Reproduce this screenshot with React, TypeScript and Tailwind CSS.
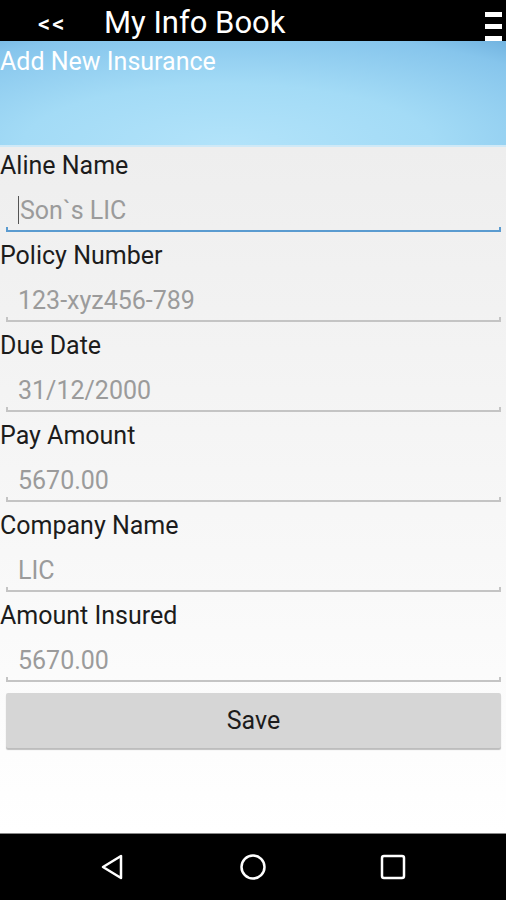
import React from 'react';

const FIELDS = [
  { label: 'Aline Name', value: 'Son`s LIC', focused: true },
  { label: 'Policy Number', value: '123-xyz456-789' },
  { label: 'Due Date', value: '31/12/2000' },
  { label: 'Pay Amount', value: '5670.00' },
  { label: 'Company Name', value: 'LIC' },
  { label: 'Amount Insured', value: '5670.00' },
];

function Field({ label, value, focused }: { label: string; value: string; focused?: boolean }) {
  const line = focused ? 'bg-[#5a9bd0]' : 'bg-[#c4c4c4]';
  return (
    <div className="flex flex-col h-[90px]">
      <div className="h-[36px] flex items-center text-[25px] text-[#1c1c1c] leading-none">{label}</div>
      <div className="relative ml-[6px] mr-[5px] h-[54px] flex items-center pl-[12px]">
        {focused && <span className="w-[1px] h-[28px] bg-[#555] mr-[1px]" />}
        <span className="text-[25px] leading-none text-[#9b9b9b]">{value}</span>
        {/* underline with end ticks */}
        <div className={`absolute left-0 right-0 bottom-[5px] h-[2px] ${line}`} />
        <div className={`absolute left-0 bottom-[5px] w-[2px] h-[5px] ${line}`} />
        <div className={`absolute right-0 bottom-[5px] w-[2px] h-[5px] ${line}`} />
      </div>
    </div>
  );
}

export default function App() {
  return (
    <div className="w-[506px] h-[900px] flex flex-col overflow-hidden font-['Roboto','Liberation_Sans',sans-serif]">
      {/* Action bar */}
      <div className="relative h-[41px] bg-black flex items-center shrink-0">
        <span className="ml-[38px] w-[28px] text-white text-[24px] font-medium leading-none tracking-[2px] pt-[6px]">&lt;&lt;</span>
        <span className="ml-[38px] text-white text-[31px] leading-none pt-[4px]">My Info Book</span>
        <div className="absolute right-[4px] top-[12px] flex flex-col gap-[7px] z-10">
          <div className="w-[17px] h-[5px] bg-white" />
          <div className="w-[17px] h-[5px] bg-white" />
          <div className="w-[17px] h-[5px] bg-white" />
        </div>
      </div>

      {/* Header */}
      <div className="h-[106px] shrink-0 bg-[radial-gradient(ellipse_90%_130%_at_45%_100%,#b2e3fa_0%,#a3dbf6_45%,#86c5ec_85%,#6fb1de_100%)] border-b-[2px] border-[#cfe9f7]">
        <div className="text-white text-[25px] leading-none pt-[8px]">Add New Insurance</div>
      </div>

      {/* Form */}
      <div className="flex-1 flex flex-col bg-gradient-to-b from-[#eeeeee] to-[#ffffff]">
        {FIELDS.map((f) => (
          <Field key={f.label} label={f.label} value={f.value} focused={f.focused} />
        ))}
        <div className="pl-[6px] pr-[5px] pt-[6px]">
          <button className="w-full h-[55px] bg-[#d6d6d6] text-[25px] text-[#1c1c1c] shadow-[0_2px_1px_rgba(0,0,0,0.25)] rounded-[2px]">
            Save
          </button>
        </div>
      </div>

      {/* Navigation bar */}
      <div className="h-[67px] shrink-0 bg-black flex items-center justify-center gap-[108px] border-t border-[#888]">
        <svg width="32" height="32" viewBox="0 0 32 32" fill="none" stroke="white" strokeWidth="2.5" strokeLinejoin="round">
          <path d="M24 5 L24 27 L6 16 Z" />
        </svg>
        <svg width="32" height="32" viewBox="0 0 32 32" fill="none" stroke="white" strokeWidth="2.5">
          <circle cx="16" cy="16" r="11.5" />
        </svg>
        <svg width="32" height="32" viewBox="0 0 32 32" fill="none" stroke="white" strokeWidth="2.5" strokeLinejoin="round">
          <rect x="5" y="5" width="22" height="22" rx="2" />
        </svg>
      </div>
    </div>
  );
}
